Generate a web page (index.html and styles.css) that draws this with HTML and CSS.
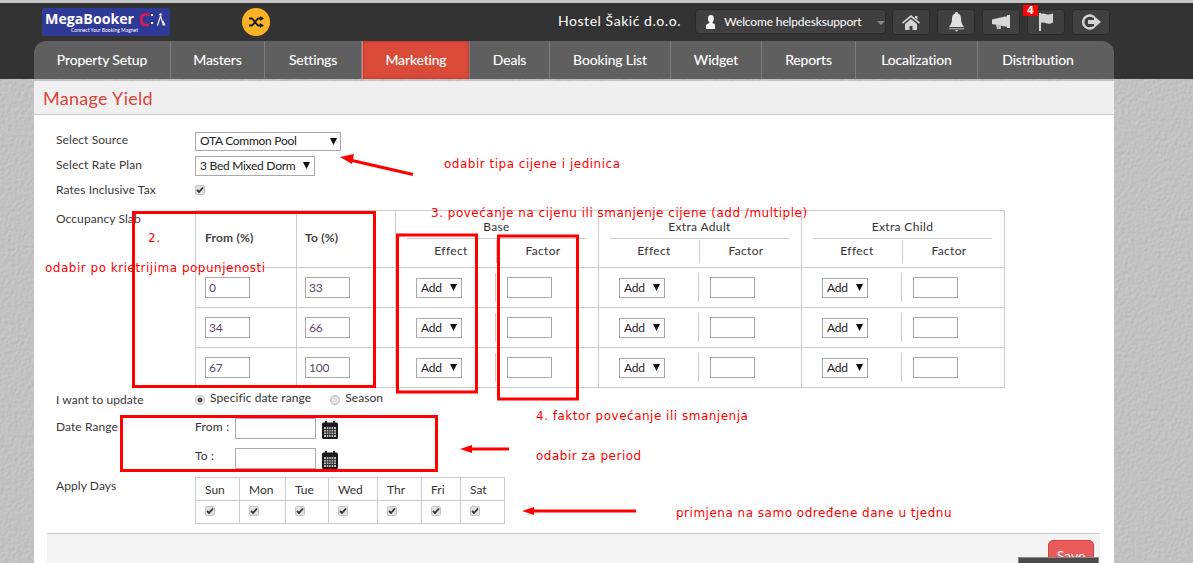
FILE: index.html
```html
<!DOCTYPE html>
<html lang="hr">
<head>
<meta charset="utf-8">
<title>Manage Yield</title>
<link rel="stylesheet" href="styles.css">
</head>
<body>
<header class="topbar">
  <div class="header-row">
    <svg class="logo" width="128" height="28" viewBox="0 0 128 28">
      <rect width="128" height="28" rx="2" fill="#2f3a96"/>
      <text x="3" y="15.5" class="logo-name">MegaBooker</text>
      <text x="29" y="23.5" class="logo-tag">Connect Your Booking Magnet</text>
      <path d="M107 6.500h-4a3.500 3.500 0 0 0-3.500 3.500v3.500a3.500 3.500 0 0 0 3.500 3.500h4" fill="none" stroke="#e8174f" stroke-width="2.600"/>
      <rect x="109" y="6" width="2" height="2" fill="#fff"/>
      <rect x="109" y="14" width="2" height="2" fill="#fff"/>
      <circle cx="118.500" cy="6.500" r="1.200" fill="#fff"/>
      <path d="M118.500 8l-3 9.500M118.500 8l3 9.500M121 13l2 4.500" fill="none" stroke="#fff" stroke-width="1.100"/>
    </svg>
    <span class="shuffle">
      <svg width="16" height="12" viewBox="0 0 16 12"><path d="M1 2.500h3l6 7h3M1 9.500h3l6-7h3" fill="none" stroke="#1a1a1a" stroke-width="1.800"/><path d="M12 0l4 2.500-4 2.500zM12 7l4 2.500-4 2.500z" fill="#1a1a1a"/></svg>
    </span>
    <span class="hostel">Hostel Šakić d.o.o.</span>
    <button class="welcome" type="button">
      <svg width="10" height="14" viewBox="0 0 10 14"><path d="M5 0c2 0 3 1.500 3 3.500S7 7 6.500 7.500c0 1 3.500 1.500 3.500 3V14H0v-3.500c0-1.500 3.500-2 3.500-3C3 7 2 5.500 2 3.500S3 0 5 0z" fill="#f2f2f2"/></svg>
      <span class="welcome-text">Welcome helpdesksupport</span>
      <i class="caret"></i>
    </button>
    <div class="icon-row">
      <button class="icon-btn" type="button" aria-label="Home">
        <svg width="18" height="15" viewBox="0 0 18 15"><path d="M9 0l9 7.500-1 1.200L9 2.200 1 8.700 0 7.500zM13 1h2.500v3.500L13 2.500z" fill="#d4d4d4"/><path d="M3 9l6-5 6 5v6h-4.500v-4h-3v4H3z" fill="#d4d4d4"/></svg>
      </button>
      <button class="icon-btn" type="button" aria-label="Alerts">
        <svg width="15" height="20" viewBox="0 0 15 20"><path d="M7.500 0c1 0 1.500.7 1.500 1.500 2 .7 3 2.500 3 5 0 4 1 6 3 8.500H0c2-2.500 3-4.500 3-8.500 0-2.500 1-4.300 3-5C6 .7 6.500 0 7.500 0z" fill="#e0e0e0"/><path d="M0 16.200h15v1H0zM5.500 18h4l-2 1.800z" fill="#c0c0c0"/></svg>
      </button>
      <button class="icon-btn" type="button" aria-label="Announcements">
        <svg width="18" height="14" viewBox="0 0 18 14"><path d="M0 4.500L13 1.500h2V0h3v13h-3v-1.500h-2L0 9z" fill="#d8d8d8"/><path d="M4 9.500l5 1.200V14H5z" fill="#bdbdbd"/></svg>
      </button>
      <button class="icon-btn has-badge" type="button" aria-label="Flags">
        <svg width="14" height="18" viewBox="0 0 14 18"><path d="M0 0h2v18H0zM2 1c3-1.500 5 1 8 .5 1.500-.2 3-.5 4-1v9c-1.500 1-3 1.300-4.500 1.300C7 10.800 5 8.800 2 10z" fill="#d4d4d4"/></svg>
        <b class="badge">4</b>
      </button>
      <button class="icon-btn" type="button" aria-label="Log out">
        <svg width="20" height="16" viewBox="0 0 20 16"><path d="M13 3.200A6.500 6.500 0 1 0 13 12.800" fill="none" stroke="#d4d4d4" stroke-width="2.400"/><path d="M7 6h6V2l7 6-7 6v-4H7z" fill="#d4d4d4"/></svg>
      </button>
    </div>
  </div>
  <nav class="nav">
    <a class="nav-item n1">Property Setup</a>
    <a class="nav-item n2">Masters</a>
    <a class="nav-item n3">Settings</a>
    <a class="nav-item n4 active">Marketing</a>
    <a class="nav-item n5">Deals</a>
    <a class="nav-item n6">Booking List</a>
    <a class="nav-item n7">Widget</a>
    <a class="nav-item n8">Reports</a>
    <a class="nav-item n9">Localization</a>
    <a class="nav-item n10">Distribution</a>
  </nav>
</header>

<main class="panel">
  <h1 class="title">Manage Yield</h1>
  <form class="form">
    <div class="row r-source">
      <label class="label">Select Source</label>
      <select class="sel sel-source"><option>OTA Common Pool</option></select>
    </div>
    <div class="row r-plan">
      <label class="label">Select Rate Plan</label>
      <select class="sel sel-plan"><option>3 Bed Mixed Dorm</option></select>
    </div>
    <div class="row r-tax">
      <label class="label">Rates Inclusive Tax</label>
      <input class="check" type="checkbox" checked>
    </div>
    <div class="row r-slab">
      <label class="label label-slab">Occupancy Slab</label>
      <table class="slab">
        <colgroup>
          <col class="c-from"><col class="c-to">
          <col class="c-eff"><col class="c-fac1">
          <col class="c-eff"><col class="c-fac">
          <col class="c-eff"><col class="c-fac">
        </colgroup>
        <thead>
          <tr class="head">
            <th class="pct">From (%)</th>
            <th class="pct pct-to">To (%)</th>
            <th class="group" colspan="2">
              <div class="g-name">Base</div>
              <div class="g-sub"><span class="g-eff">Effect</span><span class="g-fac">Factor</span></div>
            </th>
            <th class="group" colspan="2">
              <div class="g-name">Extra Adult</div>
              <div class="g-sub"><span class="g-eff">Effect</span><span class="g-fac">Factor</span></div>
            </th>
            <th class="group" colspan="2">
              <div class="g-name">Extra Child</div>
              <div class="g-sub"><span class="g-eff">Effect</span><span class="g-fac">Factor</span></div>
            </th>
          </tr>
        </thead>
        <tbody>
          <tr>
            <td class="pct-cell"><input class="num" value="0"></td>
            <td class="pct-cell pct-to"><input class="num" value="33"></td>
            <td class="eff"><select class="sel sel-add"><option>Add</option></select></td>
            <td class="fac"><div class="fac-in"><input class="num"></div></td>
            <td class="eff"><select class="sel sel-add"><option>Add</option></select></td>
            <td class="fac"><div class="fac-in"><input class="num"></div></td>
            <td class="eff"><select class="sel sel-add"><option>Add</option></select></td>
            <td class="fac"><div class="fac-in"><input class="num"></div></td>
          </tr>
          <tr>
            <td class="pct-cell"><input class="num" value="34"></td>
            <td class="pct-cell pct-to"><input class="num" value="66"></td>
            <td class="eff"><select class="sel sel-add"><option>Add</option></select></td>
            <td class="fac"><div class="fac-in"><input class="num"></div></td>
            <td class="eff"><select class="sel sel-add"><option>Add</option></select></td>
            <td class="fac"><div class="fac-in"><input class="num"></div></td>
            <td class="eff"><select class="sel sel-add"><option>Add</option></select></td>
            <td class="fac"><div class="fac-in"><input class="num"></div></td>
          </tr>
          <tr>
            <td class="pct-cell"><input class="num" value="67"></td>
            <td class="pct-cell pct-to"><input class="num" value="100"></td>
            <td class="eff"><select class="sel sel-add"><option>Add</option></select></td>
            <td class="fac"><div class="fac-in"><input class="num"></div></td>
            <td class="eff"><select class="sel sel-add"><option>Add</option></select></td>
            <td class="fac"><div class="fac-in"><input class="num"></div></td>
            <td class="eff"><select class="sel sel-add"><option>Add</option></select></td>
            <td class="fac"><div class="fac-in"><input class="num"></div></td>
          </tr>
        </tbody>
      </table>
    </div>
    <div class="row r-update">
      <label class="label label-update">I want to update</label>
      <input class="radio" type="radio" name="u" checked><span class="radio-text">Specific date range</span>
      <input class="radio radio-2" type="radio" name="u"><span class="radio-text">Season</span>
    </div>
    <div class="row r-date">
      <label class="label label-date">Date Range</label>
      <div class="dates">
        <div class="date-line">
          <span class="date-label">From :</span><input class="date-in">
          <svg class="cal" width="16" height="18" viewBox="0 0 16 18"><use href="#cal-shape"/></svg>
        </div>
        <div class="date-line">
          <span class="date-label date-label-to">To :</span><input class="date-in">
          <svg class="cal" width="16" height="18" viewBox="0 0 16 18"><use href="#cal-shape"/></svg>
        </div>
      </div>
    </div>
    <div class="row r-days">
      <label class="label label-days">Apply Days</label>
      <table class="days">
        <tr><th class="d1">Sun</th><th class="d2">Mon</th><th class="d3">Tue</th><th class="d4">Wed</th><th class="d5">Thr</th><th class="d6">Fri</th><th class="d7">Sat</th></tr>
        <tr>
          <td><input class="check" type="checkbox" checked></td>
          <td><input class="check" type="checkbox" checked></td>
          <td><input class="check" type="checkbox" checked></td>
          <td><input class="check" type="checkbox" checked></td>
          <td><input class="check" type="checkbox" checked></td>
          <td><input class="check" type="checkbox" checked></td>
          <td><input class="check" type="checkbox" checked></td>
        </tr>
      </table>
    </div>
  </form>
  <div class="footer"><button class="save" type="button">Save</button></div>
</main>
<div class="dark-tip"></div>

<svg class="defs" width="0" height="0">
  <symbol id="cal-shape" viewBox="0 0 16 18">
    <rect y="1.500" width="16" height="16.500" rx="1.500" fill="#1c1c1c"/>
    <rect x="3" y="0" width="2" height="3" fill="#1c1c1c"/><rect x="11" y="0" width="2" height="3" fill="#1c1c1c"/>
    <path d="M2 6h12v10H2z" fill="#bbb"/>
    <path d="M2 8.500h12M2 11h12M2 13.500h12M4.400 6v10M6.800 6v10M9.200 6v10M11.600 6v10" stroke="#1c1c1c" stroke-width=".8"/>
  </symbol>
</svg>

<svg class="marks" width="1193" height="563" viewBox="0 0 1193 563">
  <g fill="none" stroke="#f00" stroke-width="3">
    <rect x="133.500" y="212.500" width="241" height="174"/>
    <rect x="397.500" y="235" width="79" height="157"/>
    <rect x="498.500" y="236" width="79" height="163"/>
    <rect x="121.500" y="416.500" width="315" height="54"/>
    <path d="M413 174.500L350 160"/>
    <path d="M509 449h-40"/>
    <path d="M636 511H532"/>
  </g>
  <path d="M340 157l14-3-2 10zM460 449l12-4v8zM522 511l12-4v8z" fill="#f00"/>
</svg>
<span class="note note-1">odabir tipa cijene i jedinica</span>
<span class="note note-2">2.</span>
<span class="note note-3">odabir po krietrijima popunjenosti</span>
<span class="note note-4">3. povećanje na cijenu ili smanjenje cijene (add /multiple)</span>
<span class="note note-5">4. faktor povećanje ili smanjenja</span>
<span class="note note-6">odabir za period</span>
<span class="note note-7">primjena na samo određene dane u tjednu</span>
</body>
</html>
```

FILE: styles.css
```css
* { box-sizing: border-box; }
html, body { height: 563px; overflow: hidden; }
body {
  margin: 0;
  position: relative;
  font-family: "Lato", "Noto Sans", sans-serif;
  font-size: 12px;
  color: #333;
  background-color: #c9c9c9;
  background-image: url("data:image/svg+xml,%3Csvg xmlns='http://www.w3.org/2000/svg' width='300' height='300'%3E%3Cfilter id='n'%3E%3CfeTurbulence type='fractalNoise' baseFrequency='.3' numOctaves='3' stitchTiles='stitch'/%3E%3CfeDiffuseLighting surfaceScale='.45' diffuseConstant='1.05' lighting-color='%23cbcbcb'%3E%3CfeDistantLight azimuth='45' elevation='60'/%3E%3C/feDiffuseLighting%3E%3C/filter%3E%3Crect width='300' height='300' filter='url(%23n)'/%3E%3C/svg%3E");
}

/* Top bar */
.topbar { height: 79px; background: #333; border-top: 3px solid #c6c6c6; }
.header-row { height: 38px; display: flex; align-items: flex-start; padding: 5px 0 0 42px; }
.logo { flex: none; display: block; }
.logo-name { font: 700 14.200px "Open Sans", sans-serif; fill: #fff; }
.logo-tag { font: 5px "Lato", sans-serif; fill: #fff; }
.shuffle {
  flex: none; width: 28px; height: 28px; margin-left: 72px; border-radius: 50%;
  background: #fbb324; display: flex; align-items: center; justify-content: center;
}
.hostel {
  flex: none; width: 136.500px; margin-left: 288px; padding-top: 4px;
  color: #fff; font-size: 14px; letter-spacing: .55px;
}
.welcome {
  flex: none; width: 191px; height: 25px; margin: 1px 0 0; padding: 0 0 0 10px;
  display: flex; align-items: center; gap: 9px;
  background: #404040; border: 1px solid #2a2a2a; border-radius: 4px;
  color: #fff; font: 12px "Lato", sans-serif; letter-spacing: -.14px;
}
.welcome-text { white-space: nowrap; flex: none; }
.caret { margin: 2px 0 0 6px; width: 0; height: 0; border: 4px solid transparent; border-top-color: #8a8a8a; border-bottom: 0; }
.icon-row { display: flex; gap: 7px; margin: 1px 0 0 6.500px; }
.icon-btn {
  position: relative; width: 38px; height: 26px; padding: 0;
  display: flex; align-items: center; justify-content: center;
  background: #404040; border: 1px solid #2a2a2a; border-radius: 4px;
}
.badge {
  position: absolute; left: -5px; top: -5px; width: 15px; height: 11px;
  background: #f00; color: #fff; font: 700 10px/11px "DejaVu Sans", sans-serif; text-align: center;
}

/* Navigation */
.nav { display: flex; height: 38px; margin-left: 34px; width: 1080px; background: #5f5f5f; border-radius: 12px 12px 0 0; }
.nav-item {
  display: flex; align-items: center; justify-content: center; padding-bottom: 2px;
  color: #fff; font-size: 14px; letter-spacing: -.15px; border-right: 1px solid #7d7d7d;
  text-shadow: 0 0 1px rgba(255,255,255,.3);
}
.n1 { width: 137px; border-radius: 12px 0 0 0; } .n2 { width: 94px; } .n3 { width: 97px; } .n4 { width: 108px; }
.n5 { width: 80px; } .n6 { width: 121px; } .n7 { width: 91px; } .n8 { width: 94px; }
.n9 { width: 122px; } .n10 { width: 136px; padding-right: 16px; border-right: 0; }
.active { background: #d94a38; box-shadow: inset 0 0 3px #a83226; border-left: 1px solid #e77; }

/* Panel */
.panel { width: 1080px; height: 482px; margin: 2px 0 0 34px; background: #fff; overflow: hidden; }
.title {
  margin: 0; height: 34px; padding: 5px 0 0 9px;
  background: #f0f0f0; border-bottom: 1px solid #c8c8c8;
  color: #d9443a; font-size: 18px; font-weight: 400; line-height: 24px; letter-spacing: .3px;
}
.form { padding: 17px 0 0 22px; height: 418px; }
.row { display: flex; align-items: flex-start; }
.label { flex: none; width: 139px; letter-spacing: .08px; color: #3a3a3a; }
.r-source { height: 24px; }
.r-plan { height: 25px; }
.r-tax { height: 29px; }
.r-slab { height: 181px; }
.r-update { height: 27px; }
.r-date { height: 59px; }
.r-days { height: 56px; }
.r-source .label { line-height: 16px; }
.r-plan .label { line-height: 18px; }
.r-tax .label { line-height: 18px; }
.label-slab { line-height: 18px; }
.label-update { line-height: 18px; }
.label-date { line-height: 18px; }
.label-days { line-height: 18px; }

.sel {
  appearance: none; -webkit-appearance: none; display: block;
  padding: 0 0 2px 4px; border: 1px solid #aaa; border-radius: 0; color: #222;
  font: 12px "Lato", sans-serif; letter-spacing: -.27px; background-color: #fff; background-repeat: no-repeat;
  background-image: url("data:image/svg+xml,%3Csvg xmlns='http://www.w3.org/2000/svg' width='7' height='7'%3E%3Cpath d='M0 0h7L3.500 7z' fill='%23111'/%3E%3C/svg%3E");
}
.sel-source { width: 146px; height: 19px; background-position: 134px 5px; }
.sel-plan { width: 120px; height: 20px; background-position: 107px 5px; }
.sel-add { width: 46px; height: 20px; padding-bottom: 0; background-position: 33px 5px; }

.check {
  appearance: none; -webkit-appearance: none; display: block; margin: 4px 0 0; width: 10px; height: 10px;
  border: 1px solid #c4c4c4; border-radius: 2px; background-color: #e2e2e2; background-size: 10px 10px; background-position: -1px -1px;
  background-image: url("data:image/svg+xml,%3Csvg xmlns='http://www.w3.org/2000/svg' width='10' height='10'%3E%3Cpath d='M2 5l2 2 4-4.500' fill='none' stroke='%23333' stroke-width='1.800'/%3E%3C/svg%3E");
}
.radio {
  appearance: none; -webkit-appearance: none; margin: 4px 5px 0 0; width: 10px; height: 10px; flex: none;
  border: 1px solid #bbb; border-radius: 50%; background: #e2e2e2;
}
.radio:checked { background: radial-gradient(circle, #555 0 2.200px, #e6e6e6 2.800px); }
.radio-2 { margin-left: 19px; }
.radio-text { line-height: 14px; letter-spacing: .08px; }

/* Slab table */
.slab { border-collapse: collapse; table-layout: fixed; width: 810px; height: 178px; }
.c-from { width: 101px; } .c-to { width: 99px; }
.c-eff { width: 100px; } .c-fac { width: 103px; } .c-fac1 { width: 103px; }
.slab th, .slab td { padding: 0; border: 1px solid #ccc; font-weight: 400; }
.head { height: 57px; }
.slab .pct { font-weight: 700; text-align: left; padding: 0 0 3px 9px; letter-spacing: .2px; color: #444; }
.slab .pct-to { padding-left: 8px; }
.slab td { height: 40px; vertical-align: middle; }
.slab .eff { border-right: 0; padding-left: 20px; }
.slab .fac { border-left: 0; }
.slab .pct-cell { padding-left: 9px; }
.slab .pct-cell.pct-to { padding-left: 8px; }
.fac-in { height: 29px; margin-left: -1px; padding: 4px 0 0 11px; border-left: 1px solid #ccc; }
.num {
  display: block; width: 45px; height: 21px; padding: 0 0 0 3px;
  border: 1px solid #aaa; color: #5a4a6a; font: 12px "Lato", sans-serif; letter-spacing: -.2px; background: #fff;
}
.group { vertical-align: top; }
.g-name { height: 28px; margin: 0 12px 0 11px; padding-top: 8px; border-bottom: 1px solid #ccc; line-height: 15px; letter-spacing: .35px; color: #333; }
.g-sub { display: flex; height: 23px; margin-top: 1px; letter-spacing: .35px; color: #333; }
.g-eff { width: 101px; padding: 3px 2px 0 12px; border-right: 1px solid #ccc; }
.g-fac { flex: 1; padding: 3px 9px 0 0; }

/* Date */
.dates { display: flex; flex-direction: column; gap: 9px; }
.date-line { display: flex; align-items: flex-start; height: 21px; }
.date-label { width: 40px; line-height: 18px; letter-spacing: .2px; }
.date-label-to { line-height: 16px; }
.date-in { width: 81px; height: 21px; border: 1px solid #aaa; background: #fff; padding: 0; }
.cal { margin: 3px 0 0 6px; display: block; }
.defs { position: absolute; }

/* Days */
.days { border-collapse: collapse; table-layout: fixed; width: 309px; height: 47px; }
.days th, .days td { border: 1px solid #ccc; padding: 0 0 0 9px; font-weight: 400; text-align: left; letter-spacing: 0; }
.days th { height: 23px; }
.days td { vertical-align: top; }
.days .check { margin-top: 5px; }
.d1 { width: 44px; } .d2 { width: 46px; } .d3 { width: 43px; } .d4 { width: 49px; } .d5 { width: 44px; } .d6 { width: 39px; } .d7 { width: 44px; }

/* Footer */
.footer { margin: 0 14px 0 13px; height: 60px; background: #f3f3f3; border-top: 1px solid #ccc; padding: 6px 6px 0 0; display: flex; justify-content: flex-end; }
.save {
  width: 46px; height: 30px; padding: 0; align-self: flex-start;
  background: #e95b5b; color: #fff; border: 1px solid #d04545; border-radius: 5px;
  font: 14px "Lato", sans-serif;
}
.dark-tip { position: absolute; left: 1018px; top: 557px; width: 81px; height: 6px; background: #4a4a4a; border: 1px solid #888; border-bottom: 0; }

/* Red annotations laid over the screenshot */
.marks { position: absolute; left: 0; top: 0; pointer-events: none; }
.note { position: absolute; color: #f00; font: 12px/16px "DejaVu Sans", sans-serif; letter-spacing: .5px; white-space: nowrap; }
.note-1 { left: 444px; top: 156px; }
.note-2 { left: 148px; top: 230px; }
.note-3 { left: 45px; top: 260px; }
.note-4 { left: 431px; top: 205px; }
.note-5 { left: 536px; top: 408px; }
.note-6 { left: 536px; top: 448px; }
.note-7 { left: 676px; top: 505px; }
```
